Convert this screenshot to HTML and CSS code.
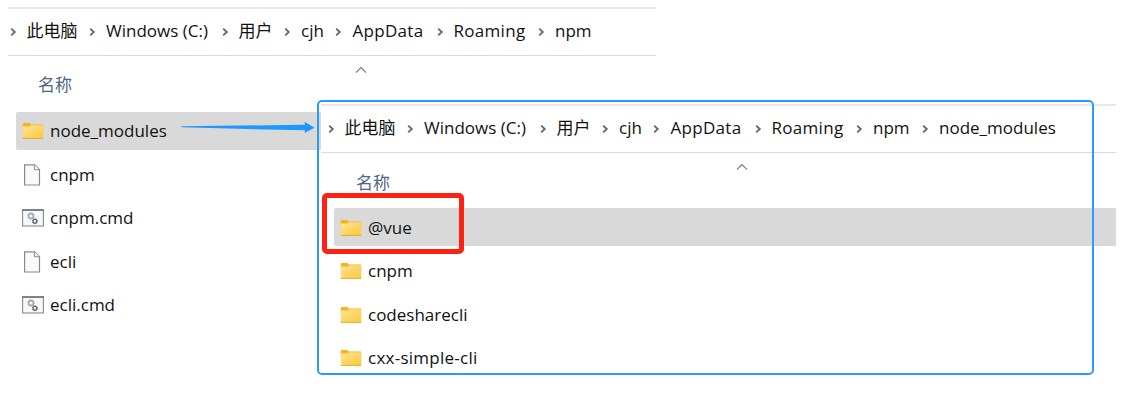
FILE: index.html
```html
<!DOCTYPE html>
<html lang="zh-CN">
<head>
<meta charset="utf-8">
<title>node_modules</title>
<link rel="stylesheet" href="styles.css">
</head>
<body>
<svg class="defs" width="0" height="0">
  <defs>
    <linearGradient id="gold" x1="0" y1="0" x2="1" y2="1"><stop offset="0" stop-color="#ffe49b"/><stop offset="1" stop-color="#fdc937"/></linearGradient>
    <symbol id="chev" viewBox="0 0 7 10"><path d="M1.2 1.7 4.8 5 1.2 8.3" fill="none" stroke="#666" stroke-width="1.8"/></symbol>
    <symbol id="folder" viewBox="0 0 22 18">
      <path d="M.8 2Q.8 1 1.8 1H7.3L9 2.4H20.4Q21.2 2.4 21.2 3.2V9H.8Z" fill="#f3b51c"/>
      <path d="M.8 4.6H7.6L9.2 3.2H21.2V16H.8Z" fill="url(#gold)"/>
      <path d="M.8 16.4H21.2" stroke="#e9a92c" stroke-width="1"/>
    </symbol>
    <symbol id="file" viewBox="0 0 22 22">
      <path d="M2.6.9H12.6L17.5 5.6V21H2.6Z" fill="#fafafa" stroke="#8a8a88" stroke-width="1.2"/>
      <path d="M12.4 1V5.7H17.4" fill="#fff" stroke="#8a8a88" stroke-width="1"/>
    </symbol>
    <symbol id="cmd" viewBox="0 0 22 18">
      <rect x=".6" y=".8" width="20.8" height="16.2" fill="#f8f8f8" stroke="#8a8a8a" stroke-width="1.1"/>
      <path d="M0 1.1H22" stroke="#6f6f6f" stroke-width="1.5"/>
      <circle cx="9" cy="7" r="2.4" fill="none" stroke="#9daebb" stroke-width="1.6"/>
      <circle cx="9" cy="7" r="3.4" fill="none" stroke="#9daebb" stroke-width="1" stroke-dasharray="1.2 1.47"/>
      <circle cx="12.9" cy="12.2" r="1.9" fill="none" stroke="#59636c" stroke-width="1.3"/>
      <circle cx="12.9" cy="12.2" r="2.7" fill="none" stroke="#59636c" stroke-width=".7" stroke-dasharray="1 1.12"/>
    </symbol>
  </defs>
</svg>
<main class="canvas">
  <section class="window outer">
    <nav class="crumbs">
      <svg class="chev"><use href="#chev"/></svg><span>此电脑</span>
      <svg class="chev"><use href="#chev"/></svg><span>Windows (C:)</span>
      <svg class="chev"><use href="#chev"/></svg><span>用户</span>
      <svg class="chev"><use href="#chev"/></svg><span>cjh</span>
      <svg class="chev"><use href="#chev"/></svg><span class="wide">AppData</span>
      <svg class="chev"><use href="#chev"/></svg><span class="wide">Roaming</span>
      <svg class="chev"><use href="#chev"/></svg><span>npm</span>
    </nav>
    <div class="heading"><span>名称</span><svg class="sort" viewBox="0 0 12 8"><path d="M1 6.7 6 1.6 11 6.7"/></svg></div>
    <ul class="files">
      <li class="selected"><svg class="folder"><use href="#folder"/></svg>node_modules</li>
      <li><svg class="file"><use href="#file"/></svg>cnpm</li>
      <li><svg class="folder"><use href="#cmd"/></svg>cnpm.cmd</li>
      <li><svg class="file"><use href="#file"/></svg>ecli</li>
      <li><svg class="folder"><use href="#cmd"/></svg>ecli.cmd</li>
    </ul>
  </section>
  <section class="window inner">
    <nav class="crumbs">
      <svg class="chev"><use href="#chev"/></svg><span>此电脑</span>
      <svg class="chev"><use href="#chev"/></svg><span>Windows (C:)</span>
      <svg class="chev"><use href="#chev"/></svg><span>用户</span>
      <svg class="chev"><use href="#chev"/></svg><span>cjh</span>
      <svg class="chev"><use href="#chev"/></svg><span class="wide">AppData</span>
      <svg class="chev"><use href="#chev"/></svg><span class="wide">Roaming</span>
      <svg class="chev"><use href="#chev"/></svg><span>npm</span>
      <svg class="chev"><use href="#chev"/></svg><span>node_modules</span>
    </nav>
    <div class="heading"><span>名称</span><svg class="sort" viewBox="0 0 12 8"><path d="M1 6.7 6 1.6 11 6.7"/></svg></div>
    <ul class="files">
      <li class="selected"><svg class="folder"><use href="#folder"/></svg>@vue</li>
      <li><svg class="folder"><use href="#folder"/></svg>cnpm</li>
      <li><svg class="folder"><use href="#folder"/></svg>codesharecli</li>
      <li><svg class="folder"><use href="#folder"/></svg><span class="hyphenated">cxx-simple-cli</span></li>
    </ul>
  </section>
  <div class="blue-frame"></div>
  <div class="red-frame"></div>
  <svg class="arrow" viewBox="0 0 134 14"><path d="M.5 5.2 124 3.8 123.5.8 133.5 6.8 123.5 12 124 9.2Q70 8.2.5 6.3Z"/></svg>
</main>
</body>
</html>
```
FILE: styles.css
```css
* { box-sizing: border-box; }
body {
  margin: 0;
  background: #fff;
  color: #111;
  font: 17px/24px "Open Sans", "Noto Sans CJK SC", sans-serif;
}
.defs { position: absolute; }
.canvas { position: relative; width: 1144px; height: 412px; overflow: hidden; }
.window { position: absolute; background: #fff; }
.outer { left: 8px; top: 7px; width: 648px; }
.inner { left: 321px; top: 104px; width: 795px; }
.crumbs {
  display: grid;
  grid-template-columns: 16.5px 62px 17.5px 115.5px 17px 45px 17.5px 34px 17.5px 84px 17px 84px 17.5px 49px 17px auto;
  align-items: center;
  height: 49px;
  padding-left: 2px;
  border-top: 2px solid #e8e8e8;
  border-bottom: 1px solid #dadada;
  white-space: nowrap;
}
.crumbs span { padding-bottom: 2px; }
.inner .crumbs { padding-left: 7px; }
.wide { letter-spacing: .3px; }
.chev { width: 7px; height: 10px; }
.heading { display: flex; height: 56px; padding-left: 30px; color: #506685; }
.heading span { width: 317px; padding-top: 17px; }
.inner .heading { height: 55px; padding-left: 35px; }
.inner .heading span { width: 380px; padding-top: 18px; }
.sort { width: 12px; height: 8px; margin-top: 10px; fill: none; stroke: #777; stroke-width: 1.1; }
.files { display: grid; gap: 5.6px; margin: 0; padding: 0 0 0 8px; list-style: none; }
.inner .files { padding-left: 13px; }
.files li { display: flex; align-items: center; height: 38px; padding-left: 6px; }
.inner .files li { padding-top: 1px; }
.selected { background: #d9d9d9; border-radius: 2px 0 0 2px; }
.folder { width: 22px; height: 18px; margin-right: 6px; }
.file { width: 22px; height: 22px; margin-right: 6px; }
.hyphenated { letter-spacing: .25px; }
.blue-frame {
  position: absolute; left: 316.5px; top: 100px; width: 777.5px; height: 275px;
  border: 2px solid #2b9bfa; border-radius: 5px;
}
.red-frame {
  position: absolute; left: 322px; top: 193px; width: 142px; height: 61px;
  border: 5px solid #ff2113; border-radius: 5px;
}
.arrow { position: absolute; left: 181px; top: 121px; width: 134px; height: 14px; fill: #1c98ff; }
```
